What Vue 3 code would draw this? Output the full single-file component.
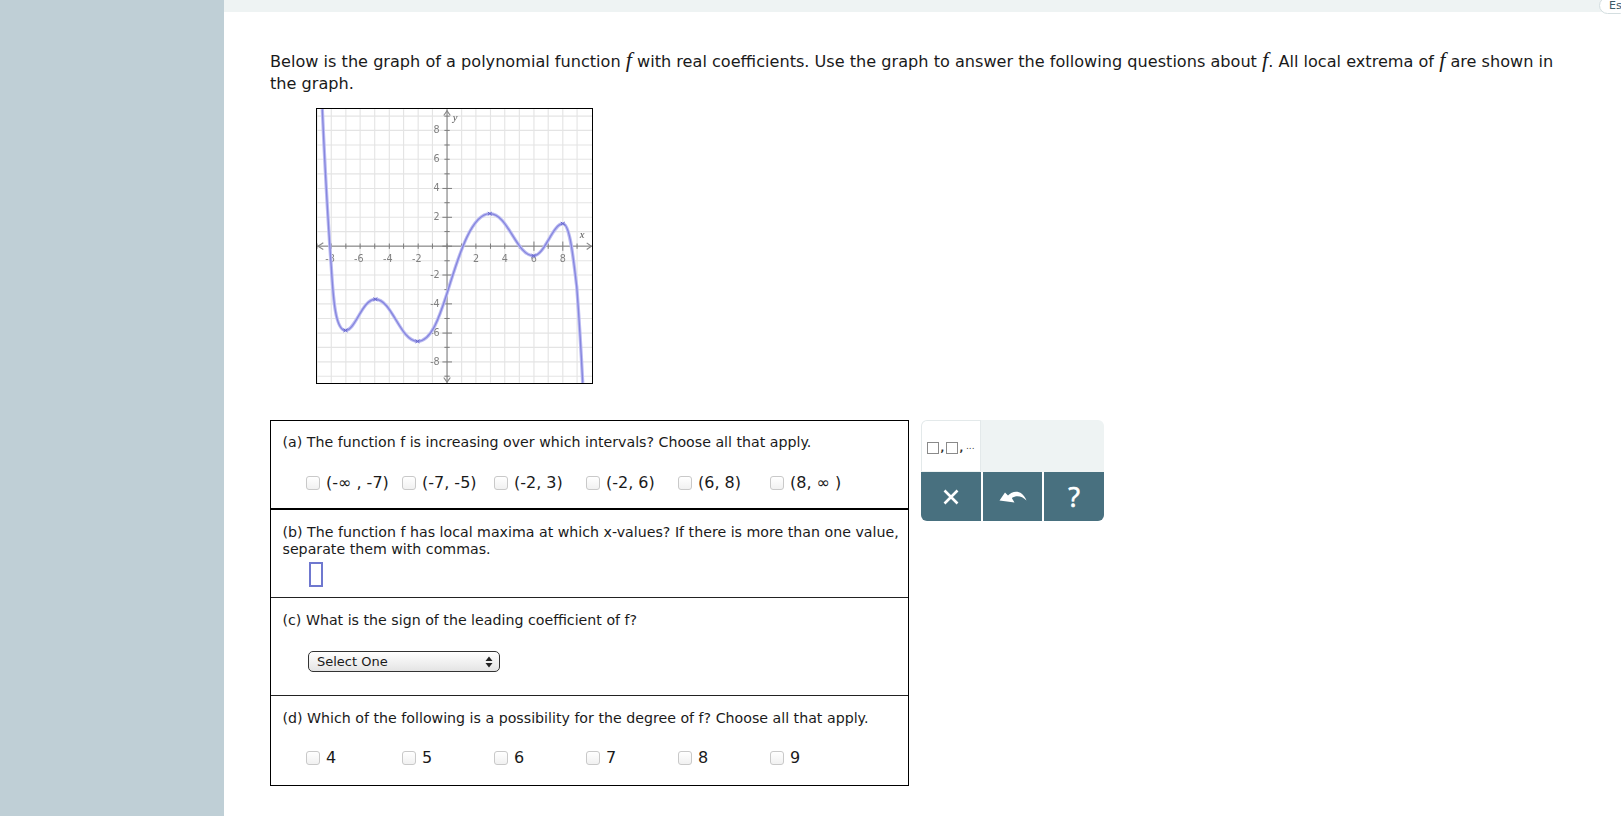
<template>
  <div class="page">
    <aside class="side"></aside>
    <main class="main">
      <div class="topbar"><button class="es">Es</button></div>
      <div class="content">
        <p class="intro">
          Below is the graph of a polynomial function <i class="fn">f</i> with real coefficients. Use the graph to answer the following questions about <i class="fn">f</i>. All local extrema of <i class="fn">f</i> are shown in the graph.
        </p>
        <div class="graph">
          <svg width="275" height="274" viewBox="49 25 829 825">
            <defs>
              <filter id="soft"><feGaussianBlur stdDeviation="1.2" /></filter>
            </defs>
            <g filter="url(#soft)">
              <path v-for="x in gridX" :key="'gx' + x" :d="`M${x} 25V850`" class="grid" />
              <path v-for="y in gridY" :key="'gy' + y" :d="`M49 ${y}H878`" class="grid" />
              <path d="M49 438H878M441 25V850" class="axis" />
              <path v-for="x in gridX" :key="'tx' + x" :d="`M${x} ${(x - 7) % 87 < 3 ? 424 : 430}V${(x - 7) % 87 < 3 ? 452 : 446}`" class="axis" />
              <path v-for="y in gridY" :key="'ty' + y" :d="`M${(y - 3) % 87 < 3 ? 427 : 433} ${y}H${(y - 3) % 87 < 3 ? 456 : 449}`" class="axis" />
              <path d="M68 428L52 438L68 448M862 428L876 438L862 448M431 44L441 30L451 44M431 834L441 848L451 834" class="arrow" />
              <text v-for="t in xLabels" :key="'lx' + t.v" :x="t.x" y="486" class="lbl" text-anchor="middle">{{ t.v }}</text>
              <text v-for="t in yLabels" :key="'ly' + t.v" x="419" :y="t.y + 8" class="lbl" text-anchor="end">{{ t.v }}</text>
              <text x="458" y="62" class="var">y</text>
              <text x="841" y="414" class="var">x</text>
              <path :d="curve" class="line-out" />
              <path :d="curve" class="line-in" />
              <path v-for="p in extrema" :key="p[0]" :d="`M${p[0] - 6} ${p[1] - 5}l12 10m0 -10l-12 10`" class="mark" />
            </g>
          </svg>
        </div>
        <div class="work">
          <div class="questions">
            <section class="q qa">
              <div class="qtext">(a) The function f is increasing over which intervals? Choose all that apply.</div>
              <div class="opts">
                <label v-for="o in intervals" :key="o" class="opt"><input type="checkbox" class="box" />{{ o }}</label>
              </div>
            </section>
            <section class="q qb">
              <div class="qtext">(b) The function f has local maxima at which x-values? If there is more than one value, separate them with commas.</div>
              <span class="answer"></span>
            </section>
            <section class="q qc">
              <div class="qtext">(c) What is the sign of the leading coefficient of f?</div>
              <div class="select">
                <span>Select One</span>
                <svg width="8" height="12" viewBox="0 0 8 12"><path d="M4 0.5L7.5 5H0.5ZM4 11.5L0.5 7H7.5Z" fill="#222" /></svg>
              </div>
            </section>
            <section class="q qd">
              <div class="qtext">(d) Which of the following is a possibility for the degree of f? Choose all that apply.</div>
              <div class="opts">
                <label v-for="o in degrees" :key="o" class="opt"><input type="checkbox" class="box" />{{ o }}</label>
              </div>
            </section>
          </div>
          <div class="palette">
            <div class="pal-top">
              <div class="pal-key">
                <span class="sq"></span><span class="cm">,</span><span class="sq"></span><span class="cm">,</span><span class="dots">...</span>
              </div>
            </div>
            <div class="pal-bottom">
              <button class="pal-btn pb1">
                <svg width="16" height="16" viewBox="0 0 16 16"><path d="M1.5 1.5L14.5 14.5M14.5 1.5L1.5 14.5" stroke="#fff" stroke-width="2.6" fill="none" /></svg>
              </button>
              <button class="pal-btn pb2">
                <svg width="28" height="13" viewBox="0 0 28 13"><path d="M0.5 10.5L6 2.5L9 5.5C14 0.2 23 -0.5 27.5 10.5C23 6 17.5 5 12.8 8L15.5 12.5Z" fill="#fff" /></svg>
              </button>
              <button class="pal-btn pb3">?</button>
            </div>
          </div>
        </div>
      </div>
    </main>
  </div>
</template>

<script setup>
const gridX = []
for (let i = -9; i <= 9; i++) gridX.push(Math.round(441 + i * 43.6))
const gridY = []
for (let i = -9; i <= 9; i++) gridY.push(Math.round(438 + i * 43.6))

const xLabels = [-8, -6, -4, -2, 2, 4, 6, 8].map(v => ({ v, x: 441 + v * 43.6 - (v < 0 ? 4 : 0) }))
const yLabels = [8, 6, 4, 2, -2, -4, -6, -8].map(v => ({ v, y: 438 - v * 43.6 }))

const intervals = ['(-∞ , -7)', '(-7, -5)', '(-2, 3)', '(-2, 6)', '(6, 8)', '(8, ∞ )']
const degrees = ['4', '5', '6', '7', '8', '9']

const extrema = [[135, 692], [225, 598], [352, 725], [570, 340], [702, 467], [790, 370]]

const curve = 'M65 25C72 180 82 360 92 500C98 600 105 692 135 692C165 692 185 598 225 598' +
  'C275 598 300 725 352 725C395 725 420 645 441 580C470 490 510 340 570 340' +
  'C625 340 650 467 702 467C735 467 760 370 790 370C812 370 822 480 832 560C838 640 845 750 850 850'
</script>

<style>
html, body {
  margin: 0;
  background: #fff;
  overflow: hidden;
}
</style>

<style scoped>
.page {
  display: flex;
  height: 816px;
  font-family: "DejaVu Sans", Verdana, sans-serif;
  color: #1a1a1a;
}
.side {
  width: 224px;
  flex: none;
  background: #bfcfd6;
}
.main {
  flex: 1;
  min-width: 0;
}
.topbar {
  height: 12px;
  background: #eef3f3;
  position: relative;
}
.es {
  position: absolute;
  right: -8px;
  top: -3px;
  width: 30px;
  height: 17px;
  padding: 0 0 0 9px;
  text-align: left;
  border: 1px solid #d4dee0;
  border-radius: 9px;
  background: #fff;
  color: #3d5a66;
  font: 11px "DejaVu Sans", sans-serif;
}
.content {
  padding: 39px 60px 0 46px;
}
.intro {
  margin: 0;
  font-size: 16.12px;
  line-height: 22px;
}
.fn {
  font-family: "Liberation Serif", serif;
  font-size: 22px;
  line-height: 0;
}
.graph {
  margin: 14px 0 0 47px;
  width: 275px;
  height: 274px;
  outline: 1px solid #000;
}
.graph svg {
  display: block;
}
.grid {
  stroke: #e4e4e4;
  stroke-width: 3.4;
  fill: none;
}
.axis {
  stroke: #7c7c7c;
  stroke-width: 3;
  fill: none;
}
.arrow {
  stroke: #8a8a8a;
  stroke-width: 3.5;
  fill: none;
}
.lbl {
  font: 29px "DejaVu Sans", sans-serif;
  fill: #808080;
}
.var {
  font: italic 32px "Liberation Serif", serif;
  fill: #555;
}
.line-out {
  fill: none;
  stroke: #bcbcf2;
  stroke-width: 10;
}
.line-in {
  fill: none;
  stroke: #8686de;
  stroke-width: 4;
}
.mark {
  stroke: #6666cc;
  stroke-width: 3;
  fill: none;
}
.work {
  display: flex;
  align-items: flex-start;
  margin-top: 37px;
  gap: 12px;
}
.questions {
  width: 639px;
  height: 366px;
  flex: none;
  border: 1px solid #000;
  display: flex;
  flex-direction: column;
  font-size: 14.2px;
  line-height: 17px;
  box-sizing: border-box;
}
.q {
  padding: 13px 8px 0 11.5px;
  box-sizing: border-box;
}
.qa {
  height: 89px;
  border-bottom: 2px solid #000;
}
.qb {
  height: 88px;
  padding-top: 14px;
  border-bottom: 1px solid #222;
}
.qc {
  height: 98px;
  padding-top: 14px;
  border-bottom: 1px solid #222;
}
.qd {
  flex: 1;
  padding-top: 14px;
}
.opts {
  display: flex;
  margin: 23px 0 0 23.5px;
  font-size: 16px;
}
.qd .opts {
  margin-top: 22px;
}
.opt {
  width: 92px;
  display: flex;
  align-items: center;
  white-space: nowrap;
  gap: 6px;
}
.opt:first-child {
  width: 96px;
}
.box {
  appearance: none;
  margin: 0;
  width: 14px;
  height: 14px;
  border: 1px solid #c9c9c9;
  border-radius: 3px;
  background: linear-gradient(#fff, #f1f1f1);
}
.answer {
  display: block;
  width: 10px;
  height: 21px;
  margin: 4px 0 0 26.5px;
  border: 2px solid #6f78cf;
}
.select {
  display: flex;
  align-items: center;
  justify-content: space-between;
  width: 192px;
  height: 21px;
  margin: 22px 0 0 25.5px;
  padding: 0 6px 0 8px;
  box-sizing: border-box;
  border: 1px solid #333;
  border-radius: 5px;
  background: linear-gradient(#fff, #e4e4e4);
  font-size: 13px;
}
.palette {
  width: 183px;
  flex: none;
  border-radius: 6px;
  overflow: hidden;
}
.pal-top {
  height: 52px;
  background: #eef3f3;
}
.pal-key {
  width: 60px;
  height: 51px;
  background: #fff;
  border: 1px solid #e3e9ea;
  border-bottom: 0;
  border-radius: 6px 0 0 0;
  box-sizing: border-box;
  display: flex;
  align-items: center;
  padding: 4px 0 0 5px;
}
.sq {
  width: 10px;
  height: 10px;
  border: 1.5px solid #8a8a8a;
}
.cm {
  font-size: 10px;
  line-height: 10px;
  width: 7px;
  text-align: center;
  color: #333;
  font-weight: bold;
}
.dots {
  font-size: 9px;
  line-height: 6px;
  padding: 0 0 4px 1px;
  color: #444;
}
.pal-bottom {
  display: flex;
  gap: 2px;
  height: 49px;
}
.pal-btn {
  flex: 1;
  border: 0;
  padding: 0;
  background: #48707f;
  color: #fff;
  display: flex;
  align-items: center;
  justify-content: center;
}
.pb3 {
  font: 400 27px "Open Sans", sans-serif;
  -webkit-text-stroke: 0.7px #fff;
}
</style>
